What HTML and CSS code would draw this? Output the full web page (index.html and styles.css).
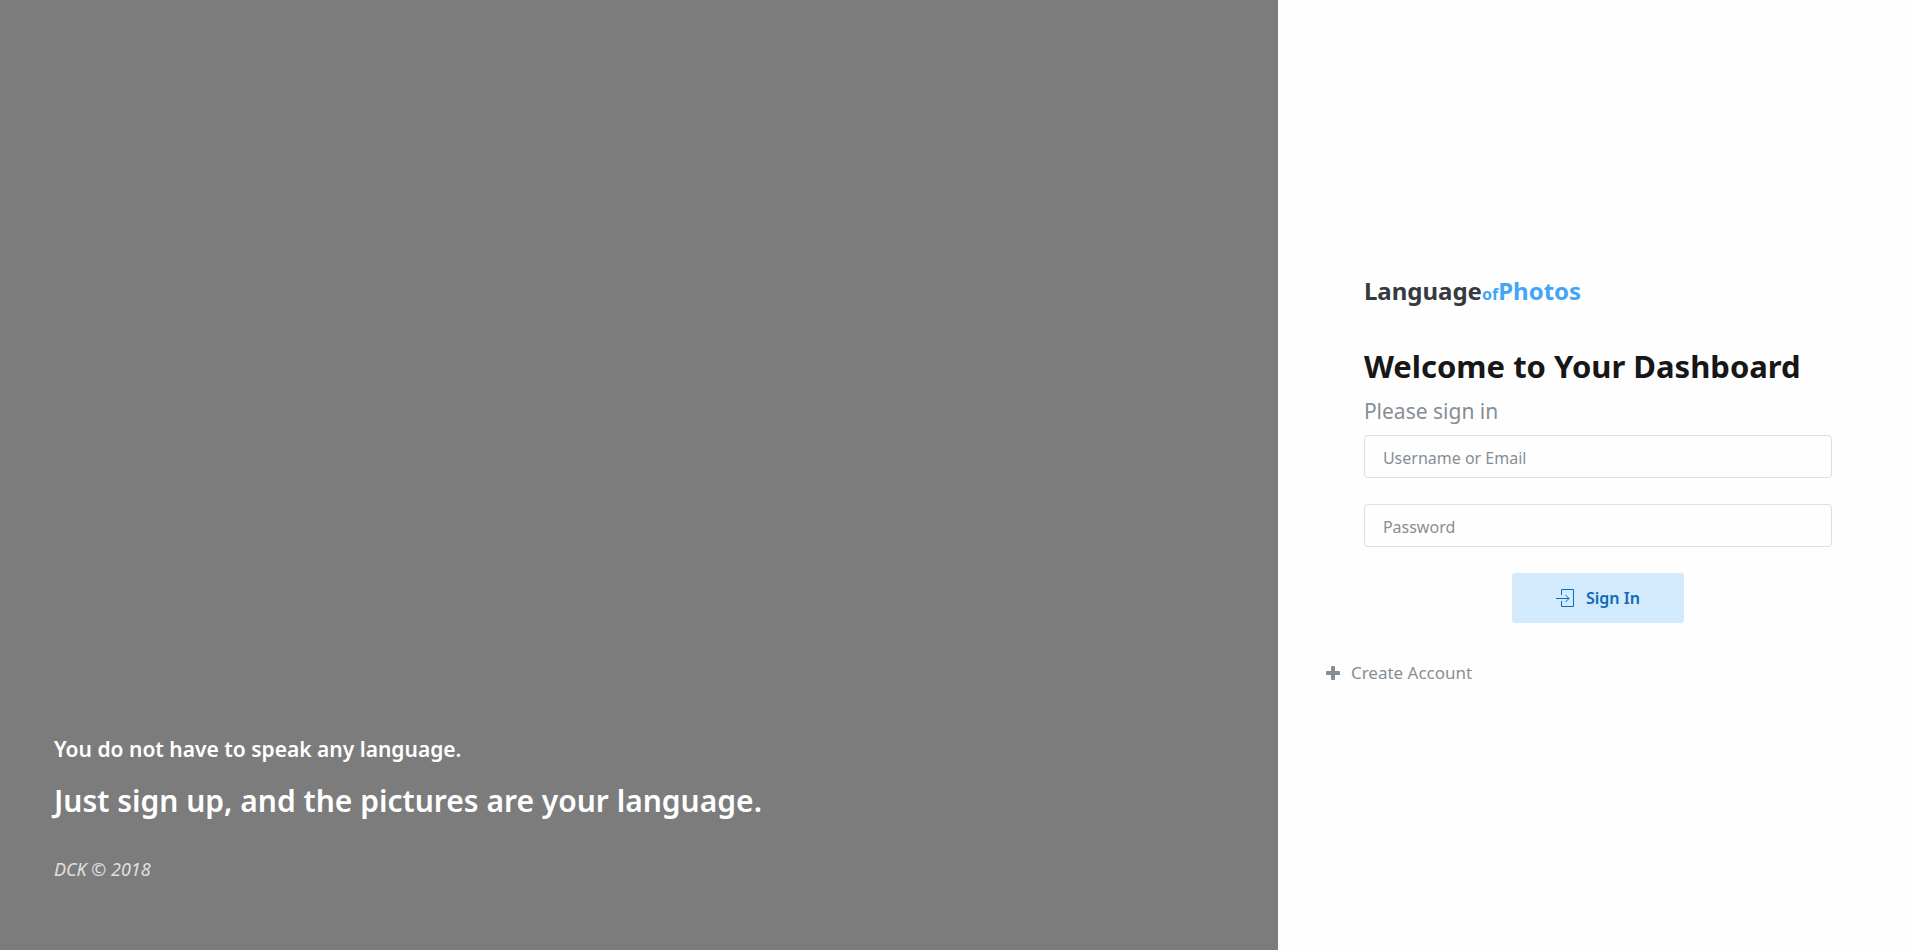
FILE: index.html
```html
<!DOCTYPE html>
<html lang="en">
<head>
    <meta charset="UTF-8">
    <meta name="viewport" content="width=device-width, initial-scale=1.0">
    <title>Language of Photos - Sign In</title>
    <link rel="stylesheet" href="styles.css">
</head>
<body>
    <main class="page">
        <!-- Cover -->
        <section class="cover">
            <p class="cover-lead">You do not have to speak any language.</p>
            <h2 class="cover-title">Just sign up, and the pictures are your language.</h2>
            <p class="cover-copyright">DCK © 2018</p>
        </section>

        <!-- Sign in -->
        <section class="panel">
            <header class="panel-header">
                <a class="logo" href="#">Language<span class="logo-of">of</span><span class="logo-photos">Photos</span></a>
                <h1 class="panel-title">Welcome to Your Dashboard</h1>
                <h2 class="panel-subtitle">Please sign in</h2>
            </header>

            <form class="signin-form" action="#" method="post">
                <input class="form-control" type="text" name="username" placeholder="Username or Email" aria-label="Username or Email">
                <input class="form-control" type="password" name="password" placeholder="Password" aria-label="Password">
                <button class="btn-signin" type="submit">
                    <svg class="icon-login" viewBox="0 0 18 18" aria-hidden="true">
                        <path d="M5.500 6V.5h12v17h-12V12M0 9.500h13M9.500 6l3.500 3.500L9.500 13"/>
                    </svg>
                    Sign In
                </button>
            </form>

            <a class="create-link" href="#">
                <svg class="icon-plus" viewBox="0 0 14 14" aria-hidden="true">
                    <path d="M6 0h2a1 1 0 0 1 1 1v4h4a1 1 0 0 1 1 1v2a1 1 0 0 1-1 1H9v4a1 1 0 0 1-1 1H6a1 1 0 0 1-1-1V9H1a1 1 0 0 1-1-1V6a1 1 0 0 1 1-1h4V1a1 1 0 0 1 1-1z"/>
                </svg>
                Create Account
            </a>
        </section>
    </main>
</body>
</html>
```
FILE: styles.css
```css
* {
    margin: 0;
    padding: 0;
    box-sizing: border-box;
}

body {
    font-family: "Segoe UI", "Noto Sans", sans-serif;
    font-size: 16px;
    line-height: 24px;
    color: #575757;
    background: #fefefe;
}

a {
    text-decoration: none;
}

.page {
    display: flex;
    min-height: 100vh;
}

/* Cover */
.cover {
    flex: 1;
    display: flex;
    flex-direction: column;
    justify-content: flex-end;
    padding: 54px;
    background: #7c7c7c;
    color: #fff;
}

.cover-lead {
    font-size: 21px;
    line-height: 32px;
    font-weight: 600;
    margin-bottom: 12px;
}

.cover-title {
    font-size: 30px;
    line-height: 48px;
    font-weight: 600;
    margin-bottom: 32px;
}

.cover-copyright {
    font-size: 18px;
    font-style: italic;
    color: #e0e0e0;
    margin-bottom: 15px;
}

/* Sign in panel */
.panel {
    flex: 0 0 33.2%;
    display: flex;
    flex-direction: column;
    justify-content: center;
    padding: 10px 48px 0;
}

.panel-header,
.signin-form {
    padding: 0 33px 0 38px;
}

.logo {
    display: block;
    font-size: 24px;
    line-height: 32px;
    font-weight: 700;
    color: #343a40;
    margin-bottom: 32px;
}

.logo-of {
    font-size: 16px;
}

.logo-of,
.logo-photos {
    color: #42a5f5;
}

.panel-title {
    font-size: 31px;
    line-height: 48px;
    font-weight: 700;
    color: #171717;
    margin-bottom: 5px;
}

.panel-subtitle {
    font-size: 21px;
    line-height: 32px;
    font-weight: 400;
    color: #868e96;
    margin-bottom: 8px;
}

.signin-form {
    display: flex;
    flex-direction: column;
    gap: 26px;
    margin-bottom: 38px;
}

.form-control {
    width: 100%;
    height: 43px;
    padding: 2px 18px 0;
    font: inherit;
    color: #575757;
    background: #fefefe;
    border: 1px solid #dcdfe3;
    border-radius: 4px;
}

.form-control::placeholder {
    color: #868e96;
    opacity: 1;
}

.btn-signin {
    align-self: center;
    display: flex;
    align-items: center;
    gap: 12px;
    height: 50px;
    padding: 0 44px;
    font: inherit;
    font-weight: 600;
    color: #0d6bb7;
    background: #d3e9fc;
    border: 0;
    border-radius: 3px;
    cursor: pointer;
}

.icon-login {
    width: 18px;
    height: 18px;
    fill: none;
    stroke: currentColor;
}

.create-link {
    display: flex;
    align-items: center;
    gap: 11px;
    font-size: 17px;
    color: #868e96;
}

.icon-plus {
    width: 14px;
    height: 14px;
    fill: currentColor;
}
```
